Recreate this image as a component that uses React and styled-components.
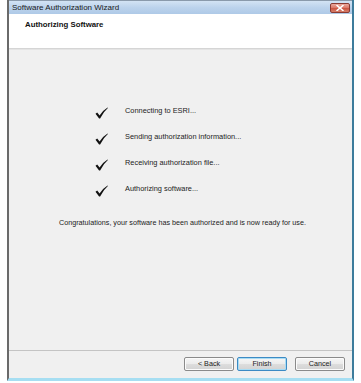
import React from "react";
import styled, { createGlobalStyle } from "styled-components";

const Global = createGlobalStyle`
  html, body { margin: 0; padding: 0; background: #ffffff; }
  body { width: 361px; height: 383px; overflow: hidden; font-family: "Liberation Sans", Arial, sans-serif; }
`;

const Page = styled.div`
  width: 361px;
  height: 383px;
  background: #ffffff;
`;

const Window = styled.div`
  margin-left: 7px;
  width: 343px;
  border-left: 2px solid #6a6a6a;
  border-right: 2px solid #3d7c9c;
  border-bottom: 3px solid #a6def2;
  display: flex;
  flex-direction: column;
`;

const TitleBar = styled.div`
  height: 13px;
  border-top: 1px solid #8a9aab;
  background: linear-gradient(to bottom, #d3e3f4 0%, #bcd3ec 50%, #aec9e7 100%);
  display: flex;
  align-items: center;
  justify-content: space-between;
  padding: 0 2px 0 3px;
`;

const Title = styled.span`
  font-size: 8px;
  color: #1a1a1a;
  line-height: 1;
  margin-top: 1px;
`;

const CloseButton = styled.div`
  width: 20px;
  height: 10px;
  margin-top: 1px;
  border-radius: 2px;
  border: 1px solid #8a3a32;
  background: linear-gradient(to bottom, #eaa99d 0%, #dc7a6a 45%, #cc5642 55%, #d67e6a 100%);
  box-sizing: border-box;
  display: flex;
  align-items: center;
  justify-content: center;
`;

const Header = styled.div`
  height: 35px;
  background: #ffffff;
  border-bottom: 1px solid #d5d5d5;
  box-sizing: border-box;
  padding: 5px 0 0 16px;
`;

const HeaderTitle = styled.div`
  font-size: 7.8px;
  font-weight: bold;
  color: #111;
  line-height: 12px;
`;

const Body = styled.div`
  height: 301px;
  background: #f0f0f0;
  border-top: 1px solid #e4e4e4;
  box-sizing: border-box;
  padding-top: 48px;
  display: flex;
  flex-direction: column;
`;

const Steps = styled.div`
  display: flex;
  flex-direction: column;
  padding-left: 86px;
`;

const Step = styled.div`
  height: 26px;
  display: flex;
  align-items: center;
  gap: 17px;
`;

const CheckBox = styled.div`
  width: 13px;
  height: 12px;
  margin-top: 4px;
  display: flex;
`;

const StepText = styled.span`
  font-size: 7.4px;
  color: #222;
  line-height: 10px;
`;

const Message = styled.div`
  margin-top: 16px;
  text-align: center;
  padding-left: 4px;
  font-size: 7.2px;
  color: #222;
  line-height: 10px;
`;

const Footer = styled.div`
  height: 28px;
  background: #f0f0f0;
  border-top: 1px solid #c4c4c4;
  box-sizing: border-box;
  display: flex;
  justify-content: flex-end;
  align-items: flex-start;
  padding: 6px 7px 0 0;
`;

const Button = styled.div`
  width: ${(p) => p.$w}px;
  height: 14px;
  margin-left: ${(p) => p.$ml}px;
  box-sizing: border-box;
  border: 1px solid ${(p) => (p.$focused ? "#3c8ac4" : "#8a8a8a")};
  border-radius: 2px;
  background: linear-gradient(to bottom, #f6f6f6 0%, #ebebeb 50%, #dddddd 51%, #d2d2d2 100%);
  box-shadow: ${(p) => (p.$focused ? "inset 0 0 0 1px #a8dcf4" : "inset 0 0 0 1px #fbfbfb")};
  display: flex;
  align-items: center;
  justify-content: center;
  font-size: 7.2px;
  color: #222;
  line-height: 1;
`;

const Check = () => (
  <svg width="13" height="12" viewBox="0 0 13 12">
    <path d="M0.5 6.8 L2.2 5.6 L4.6 8.4 Q7.8 3.2 12.6 0.4 L12.9 0.9 Q8.4 4.6 5.1 11.4 L4.1 11.4 Z" fill="#111" />
  </svg>
);

const CloseX = () => (
  <svg width="8" height="6" viewBox="0 0 8 6">
    <path d="M1 0.5 L7 5.5 M7 0.5 L1 5.5" stroke="#ffffff" strokeWidth="1.6" strokeLinecap="round" />
  </svg>
);

const steps = [
  "Connecting to ESRI...",
  "Sending authorization information...",
  "Receiving authorization file...",
  "Authorizing software...",
];

export default function App() {
  return (
    <Page>
      <Global />
      <Window>
        <TitleBar>
          <Title>Software Authorization Wizard</Title>
          <CloseButton>
            <CloseX />
          </CloseButton>
        </TitleBar>
        <Header>
          <HeaderTitle>Authorizing Software</HeaderTitle>
        </Header>
        <Body>
          <Steps>
            {steps.map((s) => (
              <Step key={s}>
                <CheckBox>
                  <Check />
                </CheckBox>
                <StepText>{s}</StepText>
              </Step>
            ))}
          </Steps>
          <Message>
            Congratulations, your software has been authorized and is now ready for use.
          </Message>
        </Body>
        <Footer>
          <Button $w={50} $ml={0}>&lt; Back</Button>
          <Button $w={50} $ml={3} $focused>Finish</Button>
          <Button $w={50} $ml={8}>Cancel</Button>
        </Footer>
      </Window>
    </Page>
  );
}
